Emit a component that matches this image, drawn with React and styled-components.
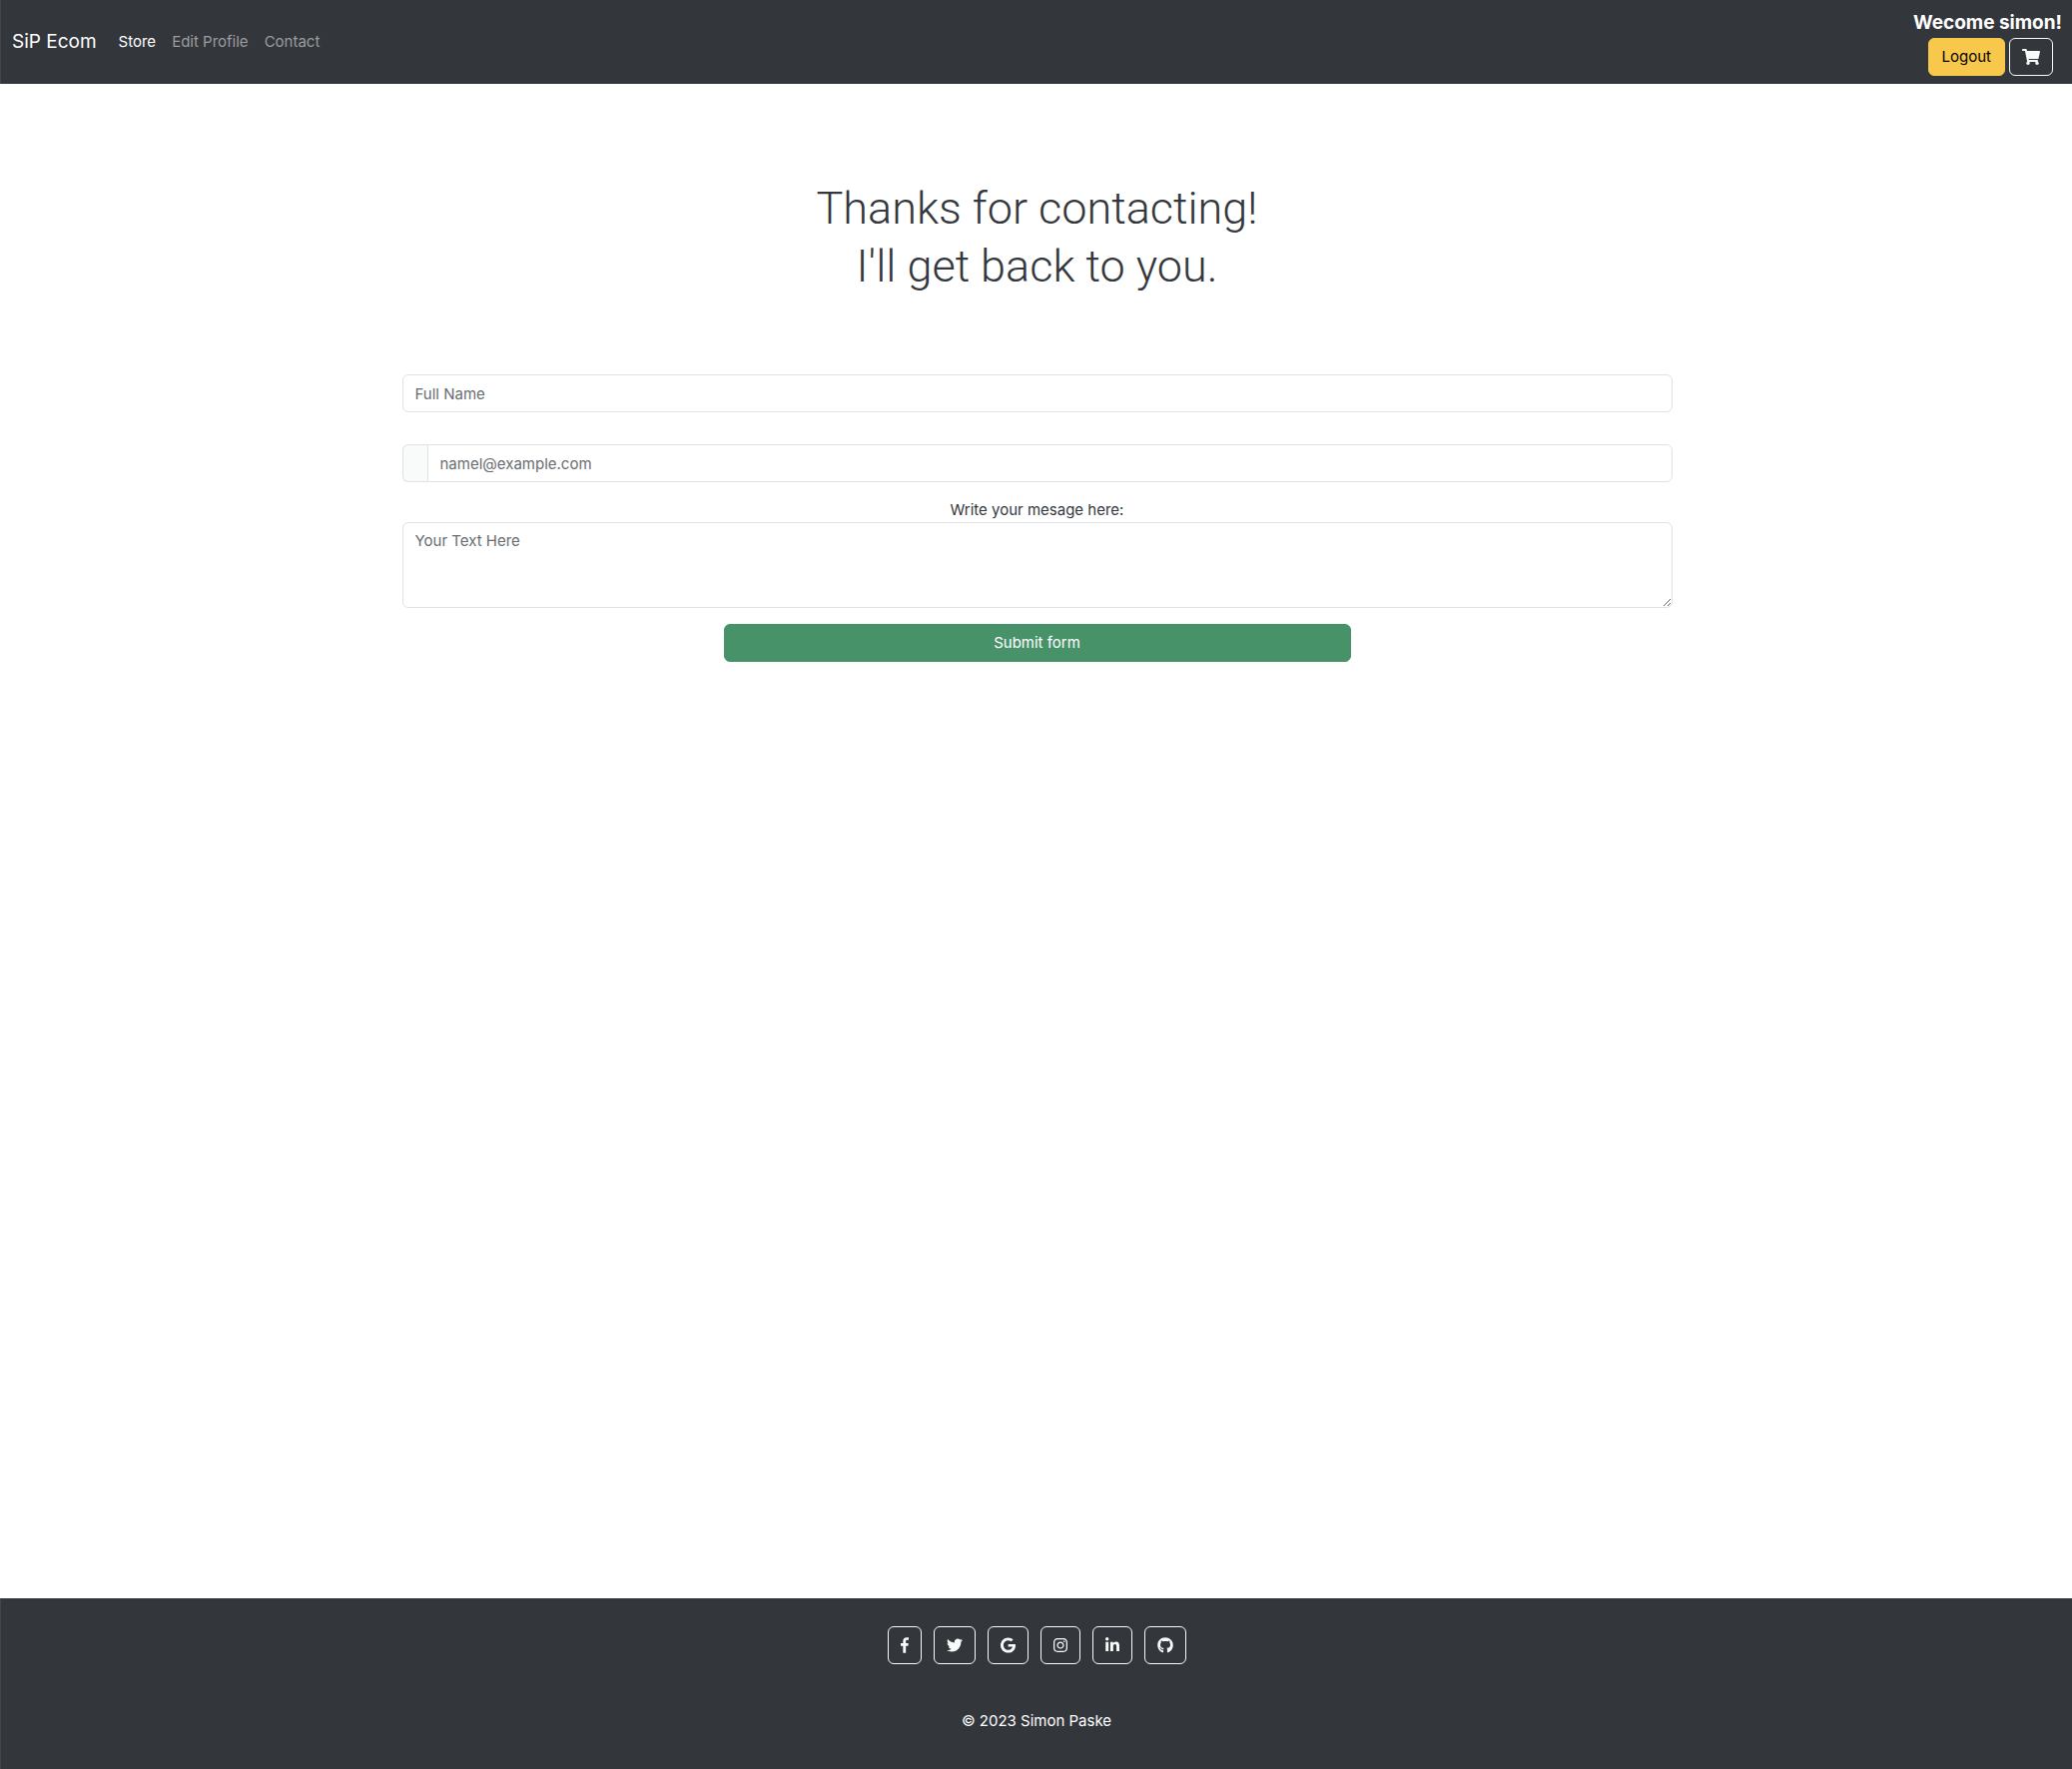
import React from "react";
import styled, { createGlobalStyle } from "styled-components";
import { FaTwitter, FaGoogle, FaInstagram, FaLinkedinIn, FaGithub, FaShoppingCart } from "react-icons/fa";

const GlobalStyle = createGlobalStyle`
  *, *::before, *::after { box-sizing: border-box; }
  body {
    margin: 0;
    background: #fff;
    color: #34373c;
    font: 400 15px/24px Inter, "Liberation Sans", sans-serif;
  }
`;

const Page = styled.div`
  min-height: 100vh;
  display: flex;
  flex-direction: column;
`;

const Navbar = styled.nav`
  display: flex;
  align-items: center;
  padding: 8px 10px 8px 11px;
  border-left: 1px solid #43474b;
  background: #33363b;
`;

const Brand = styled.a`
  margin-right: 14px;
  font-size: 19px;
  line-height: 30px;
  color: #fff;
  text-decoration: none;
`;

const NavLinks = styled.div`
  display: flex;
  flex: 1;
`;

const NavLink = styled.a`
  padding: 8px;
  color: ${(p) => (p.$active ? "#fff" : "#9b9d9f")};
  text-decoration: none;
`;

const Account = styled.div`
  display: flex;
  flex-direction: column;
  align-items: flex-end;
`;

const Welcome = styled.strong`
  font-size: 19px;
  line-height: 30px;
  font-weight: 700;
  color: #fff;
`;

const Actions = styled.div`
  display: flex;
  gap: 4px;
  padding-right: 9px;
`;

const Button = styled.button`
  height: 38px;
  padding: 6px 13px;
  border: 1px solid #f8c84c;
  border-radius: 6px;
  background: #f8c84c;
  color: #000;
  font: inherit;
  cursor: pointer;
`;

const OutlineButton = styled(Button)`
  display: inline-flex;
  align-items: center;
  justify-content: center;
  padding: 6px 12px;
  border-color: #f9fafa;
  background: transparent;
  color: #f9fafa;
`;

const OutlineLink = styled(OutlineButton).attrs({ as: "a" })``;

const Glyph = styled.span`
  display: flex;
  width: ${(p) => p.$width}px;
  height: 16px;

  svg {
    width: 100%;
    height: 100%;
  }
`;

const Main = styled.main`
  flex: 1;
  width: 100%;
  max-width: 1320px;
  margin: 0 auto;
  padding: 96px 23px 48px 25px;
`;

const Title = styled.h1`
  margin: 0 0 79px;
  font-family: Roboto, "Liberation Sans", sans-serif;
  font-size: 45px;
  line-height: 58px;
  font-weight: 350;
  text-align: center;
`;

const Form = styled.form`
  display: flex;
  flex-direction: column;
`;

const Control = styled.input`
  display: block;
  width: 100%;
  height: 38px;
  padding: 6px 12px;
  border: 1px solid #dfe2e6;
  border-radius: 6px;
  background: #fff;
  color: #34373c;
  font: inherit;

  &::placeholder {
    color: #696c6f;
    opacity: 1;
  }
`;

const InputGroup = styled.div`
  display: flex;
  margin: 32px 0 16px;

  ${Control} {
    flex: 1;
    border-radius: 0 6px 6px 0;
  }
`;

const GroupText = styled.span`
  width: 25px;
  border: 1px solid #dfe2e6;
  border-right: 0;
  border-radius: 6px 0 0 6px;
  background: #f9fafa;
`;

const Label = styled.label`
  text-align: center;
`;

const TextArea = styled(Control).attrs({ as: "textarea" })`
  height: 86px;
  resize: vertical;
`;

const Submit = styled(Button)`
  align-self: center;
  width: calc(50% - 8px);
  margin-top: 16px;
  border-color: #48926a;
  background: #48926a;
  color: #fff;
`;

const Footer = styled.footer`
  display: flex;
  flex-direction: column;
  align-items: center;
  padding: 28px 0 36px;
  border-left: 1px solid #43474b;
  background: #33363b;
  color: #fff;
`;

const Social = styled.section`
  display: flex;
  gap: 12px;
  margin-bottom: 45px;
`;

const Copyright = styled.div`
  text-align: center;
`;

const FacebookF = () => (
  <svg viewBox="0 0 264 512" fill="currentColor" aria-hidden="true">
    <path d="M76.7 512V283H0v-91h76.7v-71.7C76.7 42.4 124.3 0 193.8 0c33.3 0 61.9 2.5 70.2 3.6V85h-48.2c-37.8 0-45.1 18-45.1 44.3V192H256l-11.7 91h-73.6v229" />
  </svg>
);

const networks = [
  { name: "Facebook", Icon: FacebookF, width: 8 },
  { name: "Twitter", Icon: FaTwitter, width: 16 },
  { name: "Google", Icon: FaGoogle, width: 15 },
  { name: "Instagram", Icon: FaInstagram, width: 14 },
  { name: "LinkedIn", Icon: FaLinkedinIn, width: 14 },
  { name: "GitHub", Icon: FaGithub, width: 16 },
];

export default function App() {
  return (
    <Page>
      <GlobalStyle />
      <Navbar>
        <Brand href="#">SiP Ecom</Brand>
        <NavLinks>
          <NavLink href="#store" $active>Store</NavLink>
          <NavLink href="#profile">Edit Profile</NavLink>
          <NavLink href="#contact">Contact</NavLink>
        </NavLinks>
        <Account>
          <Welcome>Wecome simon!</Welcome>
          <Actions>
            <Button type="button">Logout</Button>
            <OutlineButton type="button" aria-label="Cart">
              <Glyph $width={18}><FaShoppingCart /></Glyph>
            </OutlineButton>
          </Actions>
        </Account>
      </Navbar>

      <Main>
        <Title>Thanks for contacting!<br />I'll get back to you.</Title>
        <Form onSubmit={(e) => e.preventDefault()}>
          <Control type="text" placeholder="Full Name" aria-label="Full Name" />
          <InputGroup>
            <GroupText />
            <Control type="email" placeholder="namel@example.com" aria-label="Email" />
          </InputGroup>
          <Label htmlFor="message">Write your mesage here:</Label>
          <TextArea id="message" placeholder="Your Text Here" />
          <Submit type="submit">Submit form</Submit>
        </Form>
      </Main>

      <Footer>
        <Social>
          {networks.map(({ name, Icon, width }) => (
            <OutlineLink key={name} href={"#" + name.toLowerCase()} aria-label={name}>
              <Glyph $width={width}><Icon /></Glyph>
            </OutlineLink>
          ))}
        </Social>
        <Copyright>© 2023 Simon Paske</Copyright>
      </Footer>
    </Page>
  );
}
